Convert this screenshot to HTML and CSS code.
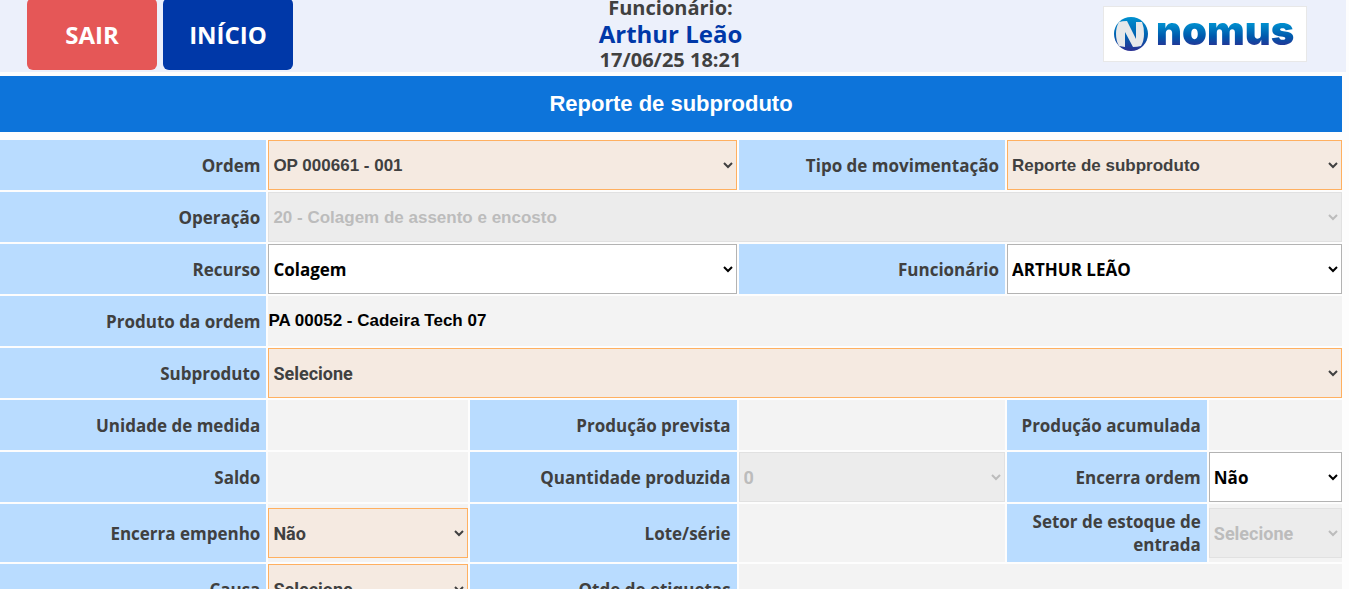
FILE: index.html
```html
<!DOCTYPE html>
<html lang="pt-BR">
<head>
  <meta charset="UTF-8">
  <meta name="viewport" content="width=device-width, initial-scale=1.0">
  <title>Reporte de subproduto</title>
  <link rel="stylesheet" href="styles.css">
</head>
<body>
  <header class="topbar">
    <nav class="actions">
      <button type="button" class="btn btn-exit">SAIR</button>
      <button type="button" class="btn btn-home">INÍCIO</button>
    </nav>
    <div class="user-info">
      <div>Funcionário:</div>
      <div class="user-name">Arthur Leão</div>
      <div>17/06/25 18:21</div>
    </div>
    <div class="brand">
      <div class="logo">
        <svg class="logo-mark" viewBox="0 0 34 34" aria-hidden="true">
          <defs>
            <linearGradient id="markFill" x1="0" y1="0" x2="0" y2="1">
              <stop offset="0" stop-color="#0090cf"/>
              <stop offset="0.55" stop-color="#0060b0"/>
              <stop offset="1" stop-color="#2b2f92"/>
            </linearGradient>
          </defs>
          <circle cx="17" cy="17" r="17" fill="url(#markFill)"/>
          <path fill="#e6e8ea" d="M5 5 Q8 4 13 4 L22 22 L22 5 L28 5 Q30 10 30 17 Q30 24 27 29 Q23 30 19 30 L11 15 L11 30 L5 29 Q2 24 2 17 Q2 10 5 5 Z"/>
        </svg>
        <span class="logo-text">nomus</span>
      </div>
    </div>
  </header>

  <main class="content">
    <h1 class="title">Reporte de subproduto</h1>

    <form class="form-grid">
      <label class="label" for="ordem">Ordem</label>
      <div class="cell span-2">
        <select id="ordem" class="field required"><option>OP 000661 - 001</option></select>
      </div>
      <label class="label" for="tipo">Tipo de movimentação</label>
      <div class="cell span-2">
        <select id="tipo" class="field required"><option>Reporte de subproduto</option></select>
      </div>

      <label class="label" for="operacao">Operação</label>
      <div class="cell span-5">
        <select id="operacao" class="field" disabled><option>20 - Colagem de assento e encosto</option></select>
      </div>

      <label class="label" for="recurso">Recurso</label>
      <div class="cell span-2">
        <select id="recurso" class="field optional"><option>Colagem</option></select>
      </div>
      <label class="label" for="funcionario">Funcionário</label>
      <div class="cell span-2">
        <select id="funcionario" class="field optional"><option>ARTHUR LEÃO</option></select>
      </div>

      <div class="label">Produto da ordem</div>
      <div class="cell span-5"><span class="value">PA 00052 - Cadeira Tech 07</span></div>

      <label class="label" for="subproduto">Subproduto</label>
      <div class="cell span-5">
        <select id="subproduto" class="field required placeholder"><option>Selecione</option></select>
      </div>

      <div class="label">Unidade de medida</div>
      <div class="cell"></div>
      <div class="label">Produção prevista</div>
      <div class="cell"></div>
      <div class="label">Produção acumulada</div>
      <div class="cell"></div>

      <div class="label">Saldo</div>
      <div class="cell"></div>
      <label class="label" for="quantidade">Quantidade produzida</label>
      <div class="cell">
        <select id="quantidade" class="field placeholder" disabled><option>0</option></select>
      </div>
      <label class="label" for="encerraOrdem">Encerra ordem</label>
      <div class="cell">
        <select id="encerraOrdem" class="field optional"><option>Não</option><option>Sim</option></select>
      </div>

      <label class="label" for="encerraEmpenho">Encerra empenho</label>
      <div class="cell">
        <select id="encerraEmpenho" class="field required placeholder"><option>Não</option><option>Sim</option></select>
      </div>
      <div class="label">Lote/série</div>
      <div class="cell"></div>
      <label class="label" for="setor">Setor de estoque de entrada</label>
      <div class="cell">
        <select id="setor" class="field placeholder" disabled><option>Selecione</option></select>
      </div>

      <label class="label" for="causa">Causa</label>
      <div class="cell">
        <select id="causa" class="field required placeholder"><option>Selecione</option></select>
      </div>
      <div class="label">Qtde de etiquetas</div>
      <div class="cell span-3"></div>
    </form>
  </main>
</body>
</html>
```
FILE: styles.css
```css
* {
  box-sizing: border-box;
}

body {
  margin: 0;
  height: 100vh;
  overflow: hidden;
  background-color: #fdfdfd;
  font-family: "Open Sans", sans-serif;
  font-weight: 700;
  color: #404040;
}

/* Top bar */
.topbar {
  display: grid;
  grid-template-columns: 1fr auto 1fr;
  grid-template-rows: 72px;
  align-items: end;
  margin-right: 3px;
  padding: 0 32px 0 27px;
  background-color: #ecf0fb;
}

.actions {
  display: flex;
  gap: 6px;
  padding-bottom: 2px;
}

.btn {
  width: 130px;
  height: 72px;
  border: none;
  border-radius: 6px;
  color: #fff;
  font-family: inherit;
  font-size: 24px;
  font-weight: 700;
  cursor: pointer;
}

.btn-exit {
  background-color: #e55757;
}

.btn-home {
  background-color: #0038a8;
}

.user-info {
  font-size: 20px;
  line-height: 25px;
  text-align: center;
}

.user-name {
  font-size: 24px;
  line-height: 27px;
  color: #0038a8;
}

.brand {
  display: flex;
  justify-content: flex-end;
  padding: 0 7px 10px 0;
}

.logo {
  display: flex;
  align-items: center;
  gap: 8px;
  width: 204px;
  height: 56px;
  padding: 0 10px;
  border: 1px solid #e8e8e8;
  background-color: #fff;
}

.logo-mark {
  flex: none;
  width: 34px;
  height: 34px;
}

.logo-text {
  padding-bottom: 6px;
  background: linear-gradient(#0090cf 30%, #0058ac 55%, #2b2f92 75%);
  background-clip: text;
  -webkit-background-clip: text;
  color: transparent;
  font-family: Inter, sans-serif;
  font-size: 40px;
  font-weight: 900;
  line-height: 48px;
}

/* Form */
.content {
  margin: 4px 7px 0 0;
}

.title {
  margin: 0 0 8px;
  background-color: #0d74da;
  color: #fff;
  font-family: "Liberation Sans", Arial, sans-serif;
  font-size: 22px;
  line-height: 56px;
  text-align: center;
}

.form-grid {
  display: grid;
  grid-template-columns: 4fr 3fr 4fr 4fr 3fr 2fr;
  grid-auto-rows: minmax(50px, auto);
  gap: 2px;
}

.label {
  display: flex;
  align-items: center;
  justify-content: flex-end;
  padding: 6px;
  background-color: #b9dcff;
  font-size: 17px;
  line-height: 23px;
  text-align: right;
}

.cell {
  display: flex;
  align-items: center;
  min-width: 0;
  background-color: #f3f3f3;
}

.span-2 { grid-column: span 2; }
.span-3 { grid-column: span 3; }
.span-5 { grid-column: span 5; }

.field {
  width: 100%;
  height: 50px;
  border: 1px solid #b3b3b3;
  border-radius: 0;
  background-color: #fff;
  color: #000;
  font-family: "Liberation Sans", Arial, sans-serif;
  font-size: 17px;
  font-weight: 700;
}

.required {
  border-color: #ffb060;
  background-color: #f5eae1;
  color: #404040;
}

.optional {
  font-family: "Open Sans", sans-serif;
}

.field:disabled {
  border-color: #e1e1e1;
  background-color: #ececec;
  color: #bcbcbc;
  opacity: 1;
}

.placeholder {
  font-family: Roboto, sans-serif;
  font-size: 18px;
}

.value {
  color: #000;
  font-family: "Liberation Sans", Arial, sans-serif;
  font-size: 17px;
}
```
